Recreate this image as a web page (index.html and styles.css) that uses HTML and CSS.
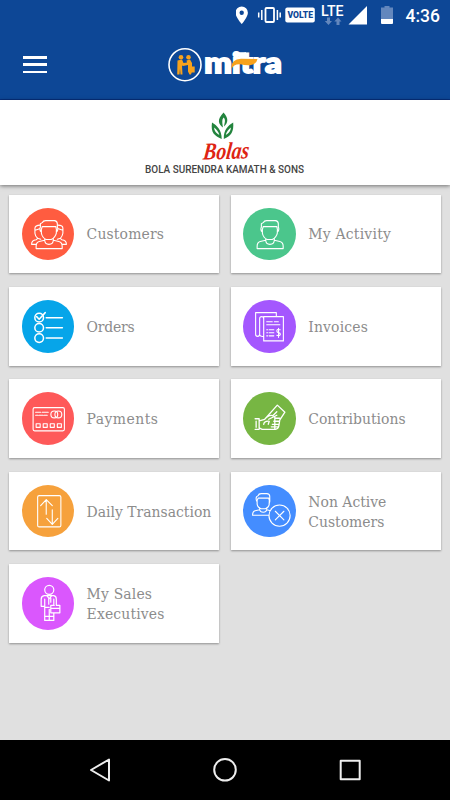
FILE: index.html
```html
<!DOCTYPE html>
<html lang="en">
<head>
<meta charset="utf-8">
<title>mitra</title>
<link rel="stylesheet" href="styles.css">
</head>
<body>
<svg class="defs" width="0" height="0">
  <symbol id="person" viewBox="0 0 52 52">
    <path d="M19 23.500C17.500 23 17.500 20 18.200 19V15.500L20 14.500Q21 12.500 23.500 12.500H32Q34.800 12.700 35 15.500V19C35.800 20 35.500 23 34.200 23.500M19 22L20 18.500H33.500L34.200 22M19.200 22V25Q20 29.500 24 31.200H29Q33 29.500 34 25V22M22.500 30.500V32Q22.700 36 26.700 36Q30.800 36 31 32V30.500M22.500 32L17 33.200Q14 34 14 38V40.200H39.800V38Q39.800 34 36.500 33.200L31 32"/>
  </symbol>
</svg>
<div class="screen">
  <header class="header">
    <div class="status">
      <svg width="214" height="32" viewBox="236 0 214 32">
        <path fill="#fff" fill-rule="evenodd" d="M241.700 6.500a6.200 6.200 0 0 0-6.200 6.200c0 4.400 6.200 11.300 6.200 11.300s6.200-6.900 6.200-11.300a6.200 6.200 0 0 0-6.200-6.200zm0 4a2.200 2.200 0 1 1 0 4.400 2.200 2.200 0 0 1 0-4.400z"/>
        <rect x="265.500" y="8" width="8.500" height="14" rx="1" fill="none" stroke="#fff" stroke-width="1.800"/>
        <path stroke="#fff" stroke-width="1.500" d="M261.800 10v10M258.700 12.500v5M277.400 10v10M280.200 12.500v5"/>
        <rect x="285.300" y="7.500" width="29.500" height="15" rx="2" fill="#fff"/>
        <text class="volte" x="287.500" y="18.300" textLength="25.500" lengthAdjust="spacingAndGlyphs">VOLTE</text>
        <text class="lte" x="321" y="16" textLength="22.500" lengthAdjust="spacingAndGlyphs">LTE</text>
        <path fill="#6387bd" d="M327 17.500h3V21h2l-3.500 4-3.700-4h2.200zM336.500 25h3v-3.500h2l-3.500-4-3.700 4h2.200z"/>
        <path fill="#fff" d="M348.500 24.500L367 6v18.500z"/>
        <path fill="#6387bd" d="M384.500 6h5v1.500h3.500V19h-12V7.500h3.500z"/>
        <path fill="#fff" d="M381 19h12v4q0 1-1 1h-10q-1 0-1-1z"/>
        <text class="time" x="405.500" y="22" textLength="34.500" lengthAdjust="spacingAndGlyphs">4:36</text>
      </svg>
    </div>
    <div class="toolbar">
      <div class="menu"><span></span><span></span><span></span></div>
      <svg class="logo" width="122" height="50" viewBox="168 40 122 50">
        <circle cx="185" cy="64.700" r="16" fill="none" stroke="#fff" stroke-width="1.600"/>
        <g fill="#f7a21c">
          <circle cx="181" cy="57.300" r="2.300"/><circle cx="188.500" cy="57.300" r="2.300"/>
          <path d="M177.500 60.500L182 59.500 183.500 63 187 62.500 186.500 60.500 190 59.500 192 63V66.500h2.700v6h-3l-.7 2h-1.500l-1.500-3v-6.500L183 66l-1-.5.500 9h-2l-.5-6-.5 6h-2.300z"/>
        </g>
        <text class="mitra" x="204.300" y="73.400" textLength="77.500" lengthAdjust="spacingAndGlyphs">mitra</text>
        <path fill="#fff" d="M239 52.200h7v8h-7z"/>
        <path fill="#f7a21c" d="M231.500 69Q230.500 59.500 241 58.800L257.500 59Q256.500 64.500 250 65.200Q245 65.500 240.500 64.300Q233.500 63.800 231.500 69z"/>
      </svg>
    </div>
  </header>

  <section class="brand">
    <svg width="170" height="68" viewBox="140 110 170 68">
      <g fill="#23843e" fill-rule="evenodd">
        <path d="M223.500 112.500C216.500 120 218.500 124 223 127.500C222 122 222 119 223.700 117.500C226 120 224.500 123 224 126.500C228.500 122.500 228.500 118 223.500 112.500z"/>
        <path d="M212 122.500C210.500 133 214.500 135.500 221.700 139C221.700 130 217 125.500 212 122.500zM214 127.500Q218 130 219.300 135Q214.500 132.500 214 127.500z"/>
        <path d="M233.200 122.500C234 132 231 136 223.800 139C223.500 130 228 125.500 233.200 122.500zM231 127.500Q227 130 225.800 135Q230.500 132.500 231 127.500z"/>
      </g>
      <text class="bolas" transform="translate(202.500 159.500) rotate(-1.500) skewX(-8)" textLength="46" lengthAdjust="spacingAndGlyphs">Bolas</text>
      <text class="company" x="145" y="172.800" textLength="159" lengthAdjust="spacingAndGlyphs">BOLA SURENDRA KAMATH &amp; SONS</text>
    </svg>
  </section>

  <main class="grid">
    <div class="card">
      <svg class="icon customers" viewBox="0 0 52 52"><g>
        <path d="M18 17Q13 17 12.800 20V25Q13 28 15.500 30L14 31.500Q9.500 32 9.500 36H14M13 22L17.500 20.500M35.500 17Q40.500 17 40.500 20V25Q40 28 38 30L39.500 31.500Q44 32 44 36H40M40.500 22L36 20.500M15.500 30l3 1M38 30l-3 1"/>
        <use href="#person" width="52" height="52"/></g></svg>
      <span class="label w-customers">Customers</span>
    </div>
    <div class="card">
      <svg class="icon activity" viewBox="0 0 52 52"><use href="#person" width="52" height="52"/></svg>
      <span class="label w-activity">My Activity</span>
    </div>
    <div class="card">
      <svg class="icon orders" viewBox="0 0 52 52"><circle cx="17" cy="17.500" r="4.300"/><circle cx="17" cy="27.500" r="4.300"/><circle cx="17" cy="37.700" r="4.300"/><path d="M14.500 16.500l2.500 2.500 6-6.500M24 17.500h16M24 27.500h16M24 37.700h16"/></svg>
      <span class="label w-orders">Orders</span>
    </div>
    <div class="card">
      <svg class="icon invoices" viewBox="0 0 52 52"><path d="M33 16V12.500H12.500V34q0 2 2 2t2-2V18.500q0-2 2-2t2 2V38M16.500 34q0 2.500 4 2M20.500 16.500H40V40.500H20.500V16.500M23.500 21.500h5.500M31 21.500h4M23.500 24.500h13M23.500 29.500h1M26 29.500h4.500M23.500 32.500h1M26 32.500h4.500M23.500 35.500h1M26 35.500h4.500M36.800 29.500Q33.500 28.500 33.500 30.700Q33.500 32 35.200 32.300Q37 32.800 37 34Q36.500 36 33.500 35M35.200 28v9"/></svg>
      <span class="label w-invoices">Invoices</span>
    </div>
    <div class="card">
      <svg class="icon payments" viewBox="0 0 52 52"><rect x="11" y="15.500" width="31" height="23" rx="1.500"/><circle cx="32" cy="22.200" r="3.400"/><circle cx="36" cy="22.200" r="3.400"/><path d="M13.500 20h5M20 20h6M13.500 23h2.500M17 23h4M22 23h3M14 31.500h4v3.500h-4zM21 31.500h4v3.500h-4zM28 31.500h4v3.500h-4zM35 31.500h4v3.500h-4z"/></svg>
      <span class="label w-payments">Payments</span>
    </div>
    <div class="card">
      <svg class="icon contributions" viewBox="0 0 52 52"><path d="M12 26.500h4v10.500h-4M13 29v6M16 28.500L21.500 27L34 13L41.500 20L36.500 27.500M16 35.500L19 37H32Q35 36.500 35.500 33.500L36.500 27.500M20.500 32Q21 28.500 26 29L25 32M21.500 27Q26 22 29.500 23.500L33.500 19.500M25.500 27L33.500 23M31.500 26h5M30.500 29h5.500M29 32h6M28 34.500h6M31.500 25v12"/></svg>
      <span class="label w-contributions">Contributions</span>
    </div>
    <div class="card">
      <svg class="icon daily" viewBox="0 0 52 52"><rect x="15.500" y="10.500" width="23" height="31" rx="1.500"/><path d="M24 29V14.500M18.500 20.500L24 14.500L30 20.500M30 24.500V39M24.500 33L30 39L35.500 33"/></svg>
      <span class="label w-daily">Daily Transaction</span>
    </div>
    <div class="card">
      <svg class="icon inactive" viewBox="0 0 52 52"><path d="M13.500 16Q12.500 13 13.500 11.500L15 10.500Q15.500 8.500 18 8.500H23.500Q26.500 8.500 26.500 11.500V15Q26.800 17 25.800 18M14 15.500L15 13H25.500L26.200 16M14 16V19Q14.500 22.500 18 23.500H22Q25.500 22.500 26 19V16M16.500 22.500V24.500Q17 27 20 27T23.500 24.500V22.500M16.500 24.500L12 25.500Q9.500 26 9.500 30H25.500M23.500 24.500L26.500 25.200"/><circle cx="36.200" cy="30.300" r="10.500"/><path d="M32 26l8.500 8.500M40.500 26L32 34.500"/></svg>
      <span class="label w-inactive">Non Active<br>Customers</span>
    </div>
    <div class="card">
      <svg class="icon sales" viewBox="0 0 52 52"><circle cx="27" cy="12.700" r="4.500"/><path d="M22 18.500H31.500Q34 19 34 22V28H37.500V35.500H28.500V28H32M22 18.500Q19 19 19 22V29H22.500V43H31.500V35.500M22.500 22V29M31.500 22V28M24.500 18.500L27 21.500L29.500 18.500M26.500 21V27M28.500 21V25M27 32V43M22.500 39H31.500M29 31H37M22.500 30H27"/></svg>
      <span class="label w-sales">My Sales<br>Executives</span>
    </div>
  </main>

  <nav class="nav">
    <svg width="450" height="60" viewBox="0 740 450 60" fill="none" stroke="#eee" stroke-width="2" stroke-linejoin="round">
      <path d="M91 770L109 759.500V780.500z"/><circle cx="225" cy="769.800" r="10.800"/><rect x="340.700" y="760.700" width="19" height="18.500"/>
    </svg>
  </nav>
</div>
</body>
</html>
```
FILE: styles.css
```css
* { box-sizing: border-box; }
body { margin: 0; font-family: Roboto, "Liberation Sans", sans-serif; }
.defs { position: absolute; }
.screen { width: 450px; height: 800px; display: flex; flex-direction: column; background: #e0e0e0; overflow: hidden; }
.header { height: 100px; background: #0d4796; border-bottom: 1px solid #06307f; }
.status { height: 32px; display: flex; justify-content: flex-end; }
.status svg, .brand svg, .nav svg { display: block; }
.volte { font: 900 9px Roboto, sans-serif; fill: #0d4796; }
.lte { font: 500 14.5px Roboto, sans-serif; fill: #fff; }
.time { font: 500 17.5px Roboto, sans-serif; fill: #fff; }
.toolbar { height: 67px; display: flex; align-items: flex-start; padding: 8px 0 0 23px; }
.menu { width: 24px; height: 17px; margin-top: 16px; display: flex; flex-direction: column; justify-content: space-between; }
.menu span { height: 2.500px; background: #fff; }
.logo { margin-left: 121px; }
.mitra { font: 900 28px Lato, sans-serif; fill: #fff; stroke: #fff; stroke-width: 1.800px; }
.brand { position: relative; height: 85px; padding: 10px 0 0 140px; background: #fff; box-shadow: 0 1px 4px rgba(0, 0, 0, .5); }
.bolas { font: italic 700 24px "Liberation Serif", serif; fill: #de2413; }
.company { font: 500 10px Roboto, sans-serif; fill: #444; }
.grid { flex: 1; display: grid; grid-template-columns: 210px 210px; grid-auto-rows: 78.500px; column-gap: 12px; row-gap: 13.900px; align-content: start; padding: 9.700px 9px 0; }
.card { display: flex; align-items: center; background: #fff; padding-left: 12.600px; box-shadow: 0 1px 2px rgba(0, 0, 0, .36); }
.card:nth-child(even) { padding-left: 12.300px; }
.icon { flex: none; width: 52.500px; height: 52.500px; border-radius: 50%; fill: none; stroke: #fff; stroke-width: 1.100px; stroke-linejoin: round; stroke-linecap: round; }
.customers { background: #ff5c40; }
.activity { background: #4bc68c; }
.orders { background: #06a5e9; stroke-width: 1.500px; }
.invoices { background: #a457fe; }
.payments { background: #fe5959; }
.contributions { background: #77b643; stroke-width: 1.300px; }
.daily { background: #f6a13c; }
.inactive { background: #448dff; }
.sales { background: #da57fd; stroke-width: 1.200px; }
.label { margin: 1px 0 0 12.500px; font: 300 15.500px/20px "Roboto Slab", "DejaVu Serif Condensed", "DejaVu Serif", serif; font-stretch: condensed; color: #8c8c8c; white-space: nowrap; }
.w-customers, .w-invoices, .w-sales { letter-spacing: .15px; }
.w-activity { letter-spacing: .22px; }
.w-orders { letter-spacing: -.2px; }
.w-payments { letter-spacing: .45px; }
.nav { flex: none; height: 60px; background: #000; }
```
